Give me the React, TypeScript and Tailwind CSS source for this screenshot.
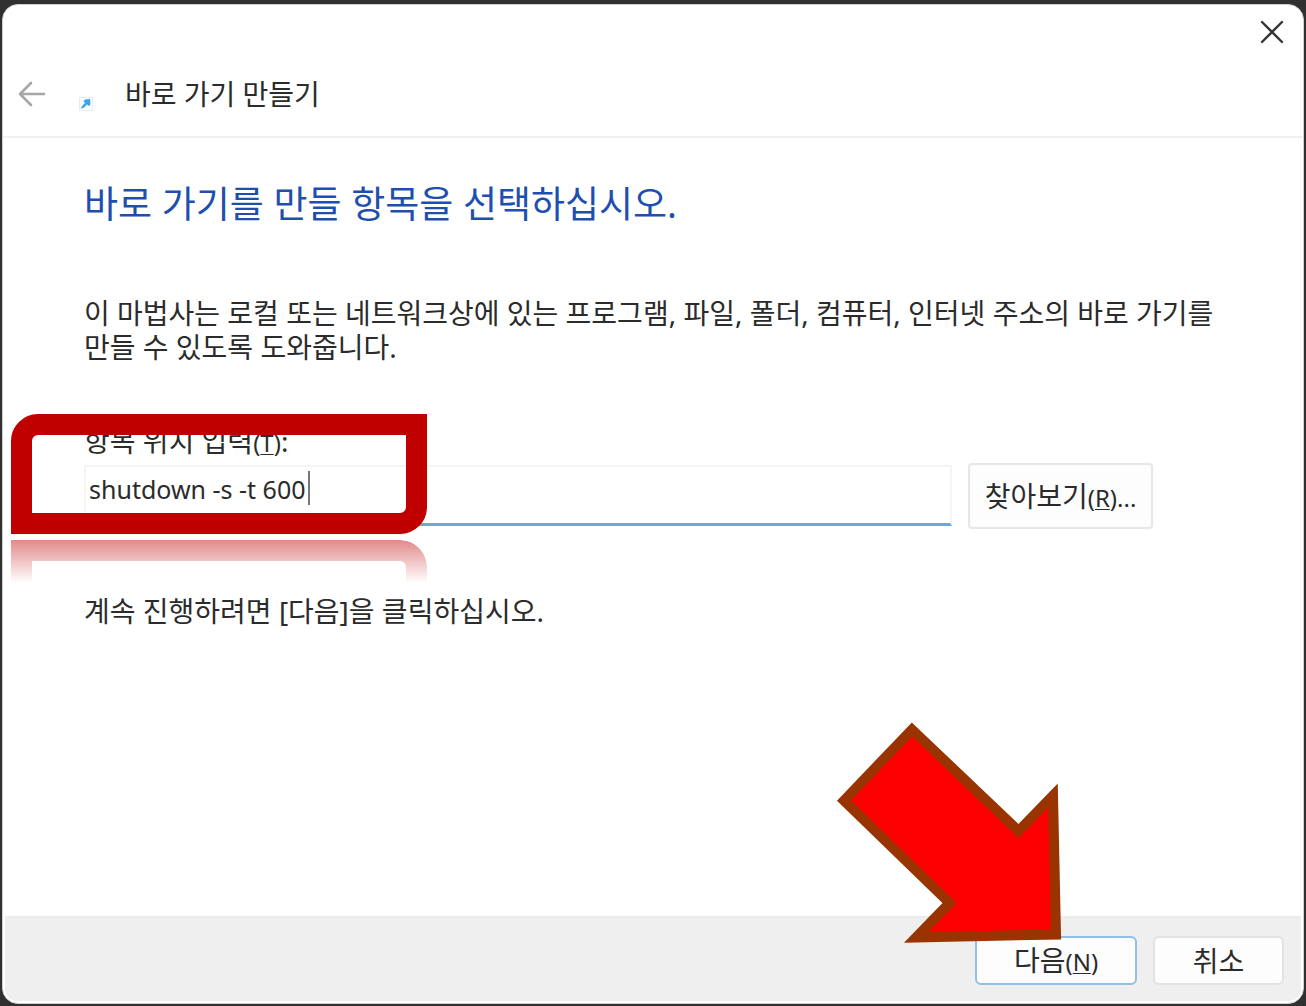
import { useState } from "react";
import type { ReactNode } from "react";

const Accel = ({ letter }: { letter: string }) => (
  <span className="text-2xl">
    (<span className="underline decoration-1 underline-offset-2">{letter}</span>)
  </span>
);

const BackIcon = () => (
  <svg width="28" height="28" viewBox="0 0 28 28" fill="none" stroke="#a6a6a6" strokeWidth="2.6" strokeLinecap="round" strokeLinejoin="round" aria-hidden="true">
    <path d="M26 14H2M13 3L2 14l11 11" />
  </svg>
);

const CloseIcon = () => (
  <svg width="24" height="24" viewBox="0 0 24 24" fill="none" stroke="#333333" strokeWidth="2.4" strokeLinecap="round" aria-hidden="true">
    <path d="M2 2l20 20M22 2L2 22" />
  </svg>
);

const ShortcutIcon = () => (
  <svg width="14" height="14" viewBox="0 0 14 14" aria-hidden="true">
    <rect x="0.5" y="0.5" width="13" height="13" fill="#fbfcfe" stroke="#e6ebf4" />
    <path d="M2 12L3 9l3-3-1.5-2L6 2.500l5-.5 .5 5.500-1.500 1.500-2-1.500-3 3z" fill="#3ba3ea" />
  </svg>
);

const PointerArrow = () => (
  <svg
    className="pointer-events-none absolute right-[72px] bottom-[39px]"
    width="235"
    height="230"
    viewBox="0 0 235 230"
    aria-hidden="true"
  >
    <path
      d="M82 13.500L188.500 115 223 79.500 226 218.500 86 221.500 119.500 187 14 84.500z"
      fill="#ff0000"
      stroke="#993300"
      strokeWidth="10"
      strokeMiterlimit="10"
    />
  </svg>
);

const HighlightFrame = () => (
  <div className="pointer-events-none absolute -top-[10px] -left-[73px] w-[416px]" aria-hidden="true">
    <div className="h-[120px] rounded-tl-[27px] rounded-br-[27px] border-[21px] border-[#c00000]" />
    <div className="mt-[6px] h-[120px] rounded-tr-[27px] rounded-bl-[27px] border-[21px] border-[#c00000] [mask-image:linear-gradient(to_bottom,rgba(0,0,0,0.46),transparent_43px)]" />
  </div>
);

const FooterButton = ({ primary, children }: { primary?: boolean; children: ReactNode }) => (
  <button
    type="button"
    className={
      primary
        ? "h-[49px] w-[162px] rounded-md border-2 border-[#90c0e8] bg-[#fdfdfd]"
        : "h-[49px] w-[131px] rounded-md border-2 border-[#e2e2e2] bg-[#fdfdfd]"
    }
  >
    {children}
  </button>
);

export default function App() {
  const [location, setLocation] = useState("shutdown -s -t 600");

  return (
    <div className="flex min-h-screen flex-col bg-[#303030] pt-1 pr-[2px] pb-[2px] pl-[2px] font-['Noto_Sans','Noto_Sans_CJK_KR',sans-serif] text-[28px] leading-[34px] text-[#2b2b2b]">
      <div className="flex flex-1 flex-col overflow-hidden rounded-2xl border border-[#d0d0d0] bg-white">
        <header className="border-b-2 border-[#f0f0f0]">
          <div className="flex h-14 items-center justify-end pr-[19px] pb-[2px]">
            <button type="button" aria-label="닫기">
              <CloseIcon />
            </button>
          </div>
          <div className="flex h-[75px] items-start pt-[15px] pl-[15px]">
            <button type="button" aria-label="뒤로" disabled className="pt-1">
              <BackIcon />
            </button>
            <span className="mt-[21px] ml-[33px]">
              <ShortcutIcon />
            </span>
            <h1 className="mt-px ml-8">바로 가기 만들기</h1>
          </div>
        </header>

        <main className="flex-1 pr-[76px] pl-[81px]">
          <h2 className="pt-[42px] text-[37px] leading-[48px] text-[#1f4fae]">
            바로 가기를 만들 항목을 선택하십시오.
          </h2>
          <p className="mt-[68px]">
            이 마법사는 로컬 또는 네트워크상에 있는 프로그램, 파일, 폴더, 컴퓨터, 인터넷 주소의 바로 가기를 만들 수 있도록 도와줍니다.
          </p>

          <div className="relative mt-[60px] mr-[74px]">
            <label htmlFor="location" className="block">
              항목 위치 입력
              <Accel letter="T" />:
            </label>
            <div className="flex items-start gap-4">
              <div className="relative mt-[6px] min-w-0 flex-1">
                <input
                  id="location"
                  type="text"
                  value={location}
                  onChange={(e) => setLocation(e.target.value)}
                  className="block h-[61px] w-full border-2 border-b-[3px] border-[#f5f5f5] border-b-[#69a8dc] bg-white px-[3px] pb-[12px] text-[25px] outline-none"
                />
                <span className="absolute top-[6px] left-[224px] h-[34px] w-[2px] bg-[#777777]" />
              </div>
              <button type="button" className="mt-1 h-[66px] w-[185px] rounded border-2 border-[#e6e6e6] bg-[#fdfdfd]">
                찾아보기
                <Accel letter="R" />
                <span className="text-2xl">...</span>
              </button>
            </div>
            <HighlightFrame />
          </div>

          <p className="mt-[65px]">계속 진행하려면 [다음]을 클릭하십시오.</p>
        </main>

        <footer className="mx-[2px] mb-[2px] flex h-[85px] items-start justify-end gap-4 rounded-b-xl border-t-2 border-[#ebebeb] bg-[#efefef] pt-[18px] pr-[17px]">
          <div className="relative flex">
            <FooterButton primary>
              다음
              <Accel letter="N" />
            </FooterButton>
            <PointerArrow />
          </div>
          <FooterButton>취소</FooterButton>
        </footer>
      </div>
    </div>
  );
}
